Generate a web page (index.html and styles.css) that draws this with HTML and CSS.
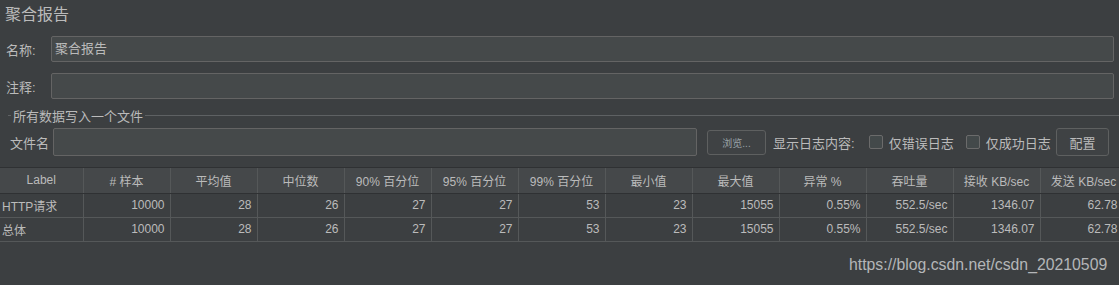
FILE: index.html
```html
<!DOCTYPE html>
<html lang="zh">
<head>
<meta charset="utf-8">
<link rel="stylesheet" href="styles.css">
</head>
<body>
<div class="page">
  <div class="title">聚合报告</div>
  <div class="row name-row">
    <span class="lbl">名称:</span>
    <div class="field">聚合报告</div>
  </div>
  <div class="row comment-row">
    <span class="lbl">注释:</span>
    <div class="field"></div>
  </div>
  <div class="group">
    <div class="legend"><span class="legend-line short"></span><span class="legend-text">所有数据写入一个文件</span><span class="legend-line grow"></span></div>
    <div class="file-row">
      <span class="file-lbl">文件名</span>
      <div class="field file-field"></div>
      <div class="btn browse">浏览...</div>
      <span class="txt show">显示日志内容:</span>
      <span class="check"></span><span class="txt">仅错误日志</span>
      <span class="check second"></span><span class="txt">仅成功日志</span>
      <div class="btn config">配置</div>
    </div>
  </div>
  <div class="table-wrap">
    <table class="grid">
      <thead>
        <tr>
          <th class="c0">Label</th><th># 样本</th><th>平均值</th><th>中位数</th><th>90% 百分位</th><th>95% 百分位</th><th>99% 百分位</th><th>最小值</th><th>最大值</th><th>异常 %</th><th>吞吐量</th><th>接收 KB/sec</th><th class="last">发送 KB/sec</th>
        </tr>
      </thead>
      <tbody>
        <tr>
          <td class="c0 left">HTTP请求</td><td>10000</td><td>28</td><td>26</td><td>27</td><td>27</td><td>53</td><td>23</td><td>15055</td><td>0.55%</td><td>552.5/sec</td><td>1346.07</td><td class="last">62.78</td>
        </tr>
        <tr>
          <td class="c0 left">总体</td><td>10000</td><td>28</td><td>26</td><td>27</td><td>27</td><td>53</td><td>23</td><td>15055</td><td>0.55%</td><td>552.5/sec</td><td>1346.07</td><td class="last">62.78</td>
        </tr>
      </tbody>
    </table>
  </div>
  <div class="watermark">https://blog.csdn.net/csdn_20210509</div>
</div>
</body>
</html>
```

FILE: styles.css
```css
html, body {
  margin: 0;
  padding: 0;
  background: #3c3f41;
  width: 1119px;
  height: 285px;
  overflow: hidden;
}
.page {
  font-family: "Liberation Sans", "Noto Sans CJK SC", sans-serif;
  color: #bbbbbb;
  font-size: 13px;
  position: relative;
  height: 285px;
}
.title {
  font-size: 16px;
  line-height: 20px;
  padding: 5px 0 0 5px;
  height: 31px;
  box-sizing: border-box;
}
.row {
  display: flex;
  align-items: center;
  padding: 0 5px 0 6px;
}
.name-row { margin-top: 5px; }
.comment-row { margin-top: 11px; }
.lbl {
  width: 45px;
  flex: none;
}
.field {
  flex: 1;
  height: 26px;
  box-sizing: border-box;
  border: 1px solid #646464;
  border-radius: 2px;
  background: #45494a;
  padding: 0 3px;
  line-height: 24px;
}
.group {
  margin-top: 9px;
}
.legend {
  display: flex;
  align-items: center;
  height: 15px;
  padding-left: 8px;
}
.legend-line {
  height: 1px;
  background: #5e6163;
}
.legend-line.short { width: 3px; }
.legend-line.grow { flex: 1; }
.legend-text { padding: 0 2px; }
.file-row {
  display: flex;
  align-items: center;
  margin-top: 5px;
  padding-left: 10px;
  padding-right: 10px;
}
.file-row > * { flex: none; }
.file-lbl { width: 43px; }
.file-field {
  width: 644px;
  height: 28px;
}
.btn {
  box-sizing: border-box;
  border: 1px solid #5e6060;
  border-radius: 3px;
  background: #3f4244;
  display: flex;
  align-items: center;
  justify-content: center;
}
.browse {
  margin-left: 10px;
  width: 59px;
  height: 25px;
  font-size: 10px;
  color: #9aa2a8;
}
.txt { white-space: nowrap; }
.txt.show { margin-left: 7px; }
.check {
  box-sizing: border-box;
  width: 14px;
  height: 14px;
  border: 1px solid #6b6b6b;
  border-radius: 2px;
  background: #43494a;
  margin-left: 14px;
  margin-right: 6px;
}
.check.second { margin-left: 12px; }
.config {
  margin-left: auto;
  width: 53px;
  height: 28px;
  font-size: 13px;
}
.table-wrap {
  margin-top: 11px;
  overflow: hidden;
  border-top: 1px solid #2f3133;
}
.grid {
  border-collapse: collapse;
  table-layout: fixed;
  width: 1127px;
  font-size: 12px;
}
.grid th, .grid td {
  width: 87px;
  box-sizing: border-box;
  border-right: 1px solid #555859;
  white-space: nowrap;
  overflow: hidden;
}
.grid th.c0, .grid td.c0 { width: 83px; }
.grid th {
  background: #45484a;
  font-weight: normal;
  height: 25px;
  text-align: center;
  border-bottom: 1px solid #2f3133;
  color: #bbbbbb;
}
.grid td {
  height: 24px;
  text-align: right;
  padding: 0 5px 0 2px;
  border-bottom: 1px solid #555859;
}
.grid td.last { padding-right: 9px; }
.grid td.left { text-align: left; }
.watermark {
  position: absolute;
  left: 849px;
  top: 256px;
  font-size: 15.8px;
  color: #b4b6b8;
  font-family: "Liberation Sans", Arial, sans-serif;
}
```
